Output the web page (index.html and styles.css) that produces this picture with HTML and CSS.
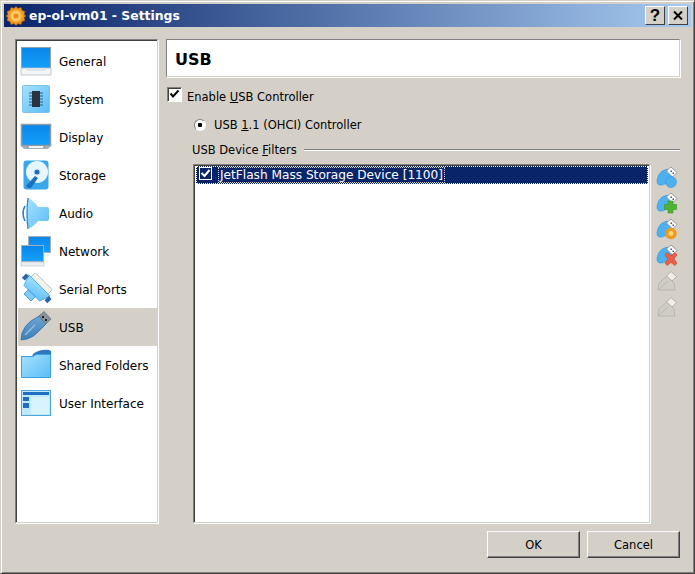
FILE: index.html
```html
<!DOCTYPE html>
<html lang="en">
<head>
<meta charset="utf-8">
<title>ep-ol-vm01 - Settings</title>
<link rel="stylesheet" href="styles.css">
</head>
<body>
<div class="window">
  <svg width="0" height="0" class="defs">
    <defs>
      <linearGradient id="blue" x1="0" y1="0" x2="0" y2="1"><stop offset="0" stop-color="#0a86e8"/><stop offset="1" stop-color="#14a0fb"/></linearGradient>
      <linearGradient id="pale" x1="0" y1="0" x2="1" y2="1"><stop offset="0" stop-color="#a5e2ff"/><stop offset="1" stop-color="#5cbcf6"/></linearGradient>
      <linearGradient id="steel" x1="0" y1="0" x2="0" y2="1"><stop offset="0" stop-color="#6da5d2"/><stop offset="1" stop-color="#3d7fb8"/></linearGradient>
      <symbol id="usbmini" viewBox="0 0 22 22">
        <path d="M1 14 Q2 8 6 5 L11 3 L17 10 L12 16 Q8 20 3 19 Q0.500 18 1 14Z" fill="#4eb1ef" stroke="#2f8fd4" stroke-width=".5"/>
        <path d="M10.500 5 L15 1 L21 6.500 L16.500 11Z" fill="#fafafa" stroke="#8c8c8c" stroke-width=".8"/>
        <path d="M14.500 4.500h1.500v1.500h-1.500zM16.500 6.500h1.500v1.500h-1.500z" fill="#555"/>
      </symbol>
      <symbol id="usbgrey" viewBox="0 0 22 22">
        <path d="M2 20 L3 13 L11 6 L18 13 L19 20Z" fill="#d0cdc5" stroke="#b3b0a8" stroke-width=".8"/>
        <path d="M10.500 6 L15 1.500 L20.500 6.500 L16 11Z" fill="#efeee9" stroke="#a8a59d" stroke-width=".8"/>
        <path d="M3 19 L12 11" stroke="#b3b0a8" stroke-width=".8"/>
      </symbol>
    </defs>
  </svg>
  <header class="titlebar">
    <svg class="app-icon" width="20" height="20" viewBox="0 0 20 20">
      <path d="M10 0.500l2 2 3-1 1 3 3 1-1 3 2 1.500-2 1.500 1 3-3 1-1 3-3-1-2 2-2-2-3 1-1-3-3-1 1-3-2-1.500 2-1.500-1-3 3-1 1-3 3 1z" fill="#f09a20" stroke="#a85e10" stroke-width=".6"/>
      <circle cx="10" cy="10" r="5.500" fill="#fdc860"/>
      <circle cx="10" cy="10" r="2.500" fill="#e88a1c"/>
    </svg>
    <span class="title-text">ep-ol-vm01 - Settings</span>
    <span class="cap-btn">?</span>
    <span class="cap-btn"><svg class="cap-x" width="10" height="9" viewBox="0 0 10 9"><path d="M1 0.500L9 8.500M9 0.500L1 8.500" stroke="#000" stroke-width="2" fill="none"/></svg></span>
  </header>
  <main class="body">
    <nav class="sidebar">
      <div class="nav-row">
        <svg class="nav-icon" viewBox="0 0 32 32"><rect x="1.500" y="2.500" width="29" height="21" fill="url(#blue)" stroke="#8fa1b0"/><path d="M1 23h30v7H1z" fill="#f4f5f6" stroke="#b3bcc4" stroke-width=".8"/><path d="M6 23h20v3H6z" fill="#dfe5ea"/></svg>
        <span>General</span>
      </div>
      <div class="nav-row">
        <svg class="nav-icon" viewBox="0 0 32 32"><rect x="2.500" y="2.500" width="27" height="27" rx="1" fill="url(#pale)" stroke="#7cc3ea"/><rect x="12" y="8" width="8" height="16" fill="#2a3440"/><path d="M9 10h3M9 13h3M9 16h3M9 19h3M9 22h3M20 10h3M20 13h3M20 16h3M20 19h3M20 22h3" stroke="#27618d" stroke-width="1.200"/></svg>
        <span>System</span>
      </div>
      <div class="nav-row">
        <svg class="nav-icon" viewBox="0 0 32 32"><rect x="1.500" y="3.500" width="29" height="21" fill="url(#blue)" stroke="#8d9aa5" stroke-width="1.500"/><path d="M1 25h30l-3 3H4z" fill="#a4adb5"/><path d="M9 25h14v2H9z" fill="#f0f3f5"/></svg>
        <span>Display</span>
      </div>
      <div class="nav-row">
        <svg class="nav-icon" viewBox="0 0 32 32"><rect x="3.500" y="1.500" width="25" height="29" rx="3" fill="#39a7ee"/><circle cx="17" cy="13" r="11" fill="#e8f6fe"/><circle cx="17" cy="13" r="2.600" fill="#1f6fc0"/><path d="M6 27 L15 17 L18 19 L11 29 Q7 30 6 27Z" fill="#1f6fc0"/></svg>
        <span>Storage</span>
      </div>
      <div class="nav-row">
        <svg class="nav-icon" viewBox="0 0 32 32"><path d="M8 1 Q13 3 18 10 H27 Q29 10 29 12 V22 Q29 24 27 24 H18 Q13 30 8 32 Q6 16 8 1Z" fill="url(#pale)"/><path d="M5 9 Q1 16 5 24" fill="none" stroke="#2f7fc4" stroke-width="1.600"/><path d="M8 1 Q6 16 8 32" fill="none" stroke="#2f7fc4" stroke-width="1.200"/></svg>
        <span>Audio</span>
      </div>
      <div class="nav-row">
        <svg class="nav-icon" viewBox="0 0 32 32"><rect x="8.500" y="1.500" width="22" height="16" fill="url(#blue)" stroke="#9cb0bf"/><rect x="14" y="18" width="16" height="3" fill="#eef1f3"/><rect x="1.500" y="10.500" width="22" height="16" fill="url(#blue)" stroke="#9cb0bf"/><rect x="1" y="27" width="23" height="4" fill="#e8edf0" stroke="#b7c1c9" stroke-width=".6"/></svg>
        <span>Network</span>
      </div>
      <div class="nav-row">
        <svg class="nav-icon" viewBox="0 0 32 32"><g transform="rotate(45 16 16)"><rect x="4" y="5" width="24" height="6" fill="#f3f3ee" stroke="#aab5bd" stroke-width=".8"/><path d="M1 11h30l-4 11H5z" fill="url(#pale)" stroke="#4aa3e0" stroke-width=".8"/><path d="M-2 12h4v6h-4zM30 12h4v6h-4z" fill="#2467ad"/><rect x="11" y="22" width="10" height="6" fill="#7ecdf6" stroke="#3a8dd0" stroke-width=".8"/></g></svg>
        <span>Serial Ports</span>
      </div>
      <div class="nav-row is-active">
        <svg class="nav-icon" viewBox="0 0 32 32"><path d="M1 29 L2 22 Q5 14 11 10 L19 5 L26 13 L20 19 Q14 26 7 28Z" fill="url(#steel)" stroke="#2f6ea5" stroke-width=".8"/><path d="M19 5 L24 0.500 L31 8 L26 13Z" fill="#8b929a" stroke="#6b7178" stroke-width=".8"/><path d="M22 5h2v2h-2zM25 8h2v2h-2z" fill="#222"/><path d="M5 24 L15 14" stroke="#8fbfe3" stroke-width="1.500"/></svg>
        <span>USB</span>
      </div>
      <div class="nav-row">
        <svg class="nav-icon" viewBox="0 0 32 32"><path d="M13 5 Q20 0 29 1 L31 2 V8 H12Z" fill="#2e75c2"/><path d="M1.500 7.500 H13 L16 5.500 H30.500 V28.500 H1.500Z" fill="url(#pale)" stroke="#3aa0e2"/></svg>
        <span>Shared Folders</span>
      </div>
      <div class="nav-row">
        <svg class="nav-icon" viewBox="0 0 32 32"><rect x="1.500" y="3.500" width="29" height="25" fill="#bfe9fd" stroke="#4aa5e0"/><rect x="3" y="5" width="26" height="3" fill="#1f6fc0"/><rect x="3" y="10" width="6" height="4" fill="#1f6fc0"/><rect x="3" y="16" width="6" height="5" fill="#1f6fc0"/><rect x="11" y="10" width="18" height="17" fill="#d8f3fe"/></svg>
        <span>User Interface</span>
      </div>
    </nav>
    <section class="page">
      <h1 class="page-title">USB</h1>
      <label class="check-row">
        <span class="checkbox"><svg width="11" height="11" viewBox="0 0 11 11"><path d="M1.500 4.500L4 7.500L9.500 1.500" stroke="#000" stroke-width="2" fill="none"/></svg></span>
        <span class="label-low">Enable <u>U</u>SB Controller</span>
      </label>
      <label class="radio-row">
        <span class="radio"></span>
        <span>USB <u>1</u>.1 (OHCI) Controller</span>
      </label>
      <div class="group-label">
        <span>USB Device <u>F</u>ilters</span>
        <span class="group-rule"></span>
      </div>
      <div class="filters">
        <div class="list">
          <div class="list-row">
            <span class="row-check"><svg width="11" height="11" viewBox="0 0 11 11"><path d="M1.500 5L4.500 8L9.500 2" stroke="#fff" stroke-width="2" fill="none"/></svg></span>
            <span class="row-text">JetFlash Mass Storage Device [1100]</span>
          </div>
        </div>
        <div class="tools">
          <svg class="tool" viewBox="0 0 22 22"><use href="#usbmini"/><circle cx="15" cy="16" r="5.500" fill="#4eb1ef" stroke="#2f8fd4" stroke-width=".5"/></svg>
          <svg class="tool" viewBox="0 0 22 22"><use href="#usbmini"/><path d="M12 9h5v3.500H20.500v5H17V21h-5v-3.500H8.500v-5H12z" fill="#4eb233" stroke="#3d8f28" stroke-width=".6"/></svg>
          <svg class="tool" viewBox="0 0 22 22"><use href="#usbmini"/><circle cx="15" cy="15.500" r="5.800" fill="#f0991f"/><circle cx="15" cy="15.500" r="2.400" fill="#ffd677"/></svg>
          <svg class="tool" viewBox="0 0 22 22"><use href="#usbmini"/><path d="M9 11l2-2.500 4 3 4-3 2 2.500-3 4 3 4-2 2.500-4-3-4 3-2-2.500 3-4z" fill="#e8604a" stroke="#c2452f" stroke-width=".6"/></svg>
          <svg class="tool" viewBox="0 0 22 22"><use href="#usbgrey"/></svg>
          <svg class="tool" viewBox="0 0 22 22"><use href="#usbgrey"/></svg>
        </div>
      </div>
    </section>
  </main>
  <footer class="actions">
    <button class="btn" type="button">OK</button>
    <button class="btn" type="button">Cancel</button>
  </footer>
</div>
</body>
</html>
```

FILE: styles.css
```css
* { box-sizing: border-box; }
html, body { margin: 0; padding: 0; }
body { width: 695px; height: 574px; overflow: hidden; background: #d4d0c8; font-family: "DejaVu Sans", sans-serif; font-size: 11.500px; color: #000; }
.defs { position: absolute; }
.window { width: 695px; height: 574px; padding: 3px; background: #d4d0c8; display: flex; flex-direction: column;
  border-right: 1px solid #404040; border-bottom: 1px solid #404040; border-top: 1px solid #d4d0c8; border-left: 1px solid #d4d0c8;
  box-shadow: inset 1px 1px 0 #fff, inset -1px -1px 0 #808080; }
.titlebar { height: 23px; flex: none; display: flex; align-items: center; gap: 3px; padding: 0 3px 0 2px; background: linear-gradient(90deg, #0a246a, #a6caf0); }
.app-icon { flex: none; }
.title-text { flex: 1; color: #fff; font-weight: bold; font-size: 12.400px; }
.cap-btn { width: 20px; height: 19px; flex: none; display: flex; align-items: center; justify-content: center; background: #d4d0c8; border: 1px solid; border-color: #fff #404040 #404040 #fff; font-family: "Liberation Sans", sans-serif; font-weight: bold; font-size: 17px; line-height: 15px; color: #000; }
.body { flex: 1; display: flex; gap: 8px; padding: 12px 11px 0 11px; min-height: 0; }
.sidebar { width: 143px; height: 484px; flex: none; background: #fff; padding: 2px 0 0 2px; border: 1px solid; border-color: #808080 #d4d0c8 #d4d0c8 #808080; box-shadow: inset 1px 1px 0 #404040, 1px 1px 0 #fff; }
.nav-row { height: 38px; display: flex; align-items: center; padding-left: 2px; gap: 7px; font-size: 12px; }
.nav-row span { padding-top: 2px; }
.nav-row.is-active { background: #d4d0c8; }
.nav-icon { width: 32px; height: 32px; flex: none; }
.page { flex: 1; display: flex; flex-direction: column; min-width: 0; }
.page-title { height: 38px; flex: none; margin: 0; padding: 0 0 0 8px; background: #fff; border: 1px solid; border-color: #808080 #d4d0c8 #d4d0c8 #808080; box-shadow: 1px 1px 0 #fff; font-size: 16px; line-height: 39px; font-weight: bold; }
.check-row { display: flex; align-items: center; gap: 5px; height: 15px; margin: 10px 0 0 1px; }
.label-low { padding-top: 5px; }
.checkbox { width: 15px; height: 15px; flex: none; display: flex; background: #fff; border: 1px solid; border-color: #808080 #fff #fff #808080; box-shadow: inset 1px 1px 0 #404040; padding: 1px 0 0 1px; }
.radio-row { display: flex; align-items: center; gap: 8px; height: 12px; margin: 17px 0 0 28px; }
.radio { width: 12px; height: 12px; flex: none; border-radius: 50%; background: radial-gradient(circle, #000 0 2px, #fff 2.500px); border: 1px solid; border-color: #808080 #fff #fff #808080; }
.group-label { display: flex; align-items: center; gap: 7px; height: 14px; margin: 12px 0 0 26px; }
.group-rule { flex: 1; height: 2px; border-top: 1px solid #808080; border-bottom: 1px solid #fff; }
.filters { flex: 1; display: flex; gap: 5px; margin: 7px 0 0 27px; min-height: 0; }
.list { flex: 1; height: 359px; background: #fff; padding: 1px 1px 2px 2px; border: 1px solid; border-color: #808080 #d4d0c8 #d4d0c8 #808080; box-shadow: inset 1px 1px 0 #404040, 1px 1px 0 #fff; }
.list-row { height: 18px; display: flex; align-items: center; gap: 6px; background: #0a246a; color: #fff; padding-left: 3px; font-size: 12.150px; outline: 1px dotted #fff; outline-offset: -1px; }
.row-check { width: 13px; height: 13px; flex: none; display: flex; border: 1px solid #fff; margin-bottom: 3px; }
.row-text { border: 1px dotted #d0d0d0; padding: 0 1px; line-height: 14px; }
.tools { width: 25px; flex: none; display: flex; flex-direction: column; gap: 4px; padding: 2px 0 0 1px; }
.tool { width: 22px; height: 22px; flex: none; }
.actions { flex: none; display: flex; justify-content: flex-end; gap: 7px; padding: 7px 11px 12px 0; }
.btn { width: 93px; height: 27px; background: #d4d0c8; border: 1px solid; border-color: #fff #404040 #404040 #fff; box-shadow: inset -1px -1px 0 #808080; font: 11.500px "DejaVu Sans", sans-serif; color: #000; padding: 0; }
```
